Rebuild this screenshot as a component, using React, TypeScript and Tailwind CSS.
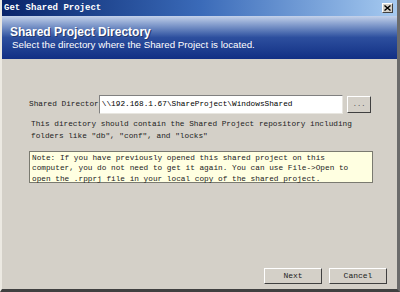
import React from 'react';

const mono = { fontFamily: '"Liberation Mono", "DejaVu Sans Mono", monospace' };

const App: React.FC = () => {
  return (
    <div className="w-[400px] h-[292px] bg-[#d4d0c8] flex flex-col overflow-hidden border-l-2 border-l-[#ece9e2] border-r-[3px] border-r-[#6b6b6b] border-b-[3px] border-b-[#404040]">
      {/* title bar */}
      <div className="h-[16px] shrink-0 flex items-center justify-between pl-[2px] pr-[4px] bg-gradient-to-r from-[#0a246a] via-[#3a6ab8] to-[#a6caf0]">
        <span className="text-white font-bold text-[9px] leading-none" style={mono}>
          Get Shared Project
        </span>
        <button className="w-[11px] h-[10px] bg-[#d4d0c8] border border-t-white border-l-white border-r-[#404040] border-b-[#404040] flex items-center justify-center">
          <svg width="7" height="6" viewBox="0 0 7 6">
            <path d="M0.5 0.5 L6.5 5.5 M6.5 0.5 L0.5 5.5" stroke="#000" strokeWidth="1.4" />
          </svg>
        </button>
      </div>

      {/* header */}
      <div
        className="h-[43px] shrink-0 flex flex-col justify-center pl-[8px] pt-[1px] bg-gradient-to-b from-[#c4d2ea] via-[#2d4f9e] to-[#122f84]"
        style={{ fontFamily: '"Liberation Sans", Arial, sans-serif' }}
      >
        <div className="text-white font-bold text-[12px] leading-[14px] [text-shadow:1px_1px_0_#24386a]">
          Shared Project Directory
        </div>
        <div className="text-white text-[9.75px] leading-[12px] pl-[2px]">
          Select the directory where the Shared Project is located.
        </div>
      </div>

      {/* body */}
      <div className="flex-1 flex flex-col pl-[27px] pr-[26px] pt-[36px]" style={mono}>
        <div className="flex items-center">
          <span className="w-[70px] whitespace-nowrap text-[7.75px] text-[#222]">
            Shared Director
          </span>
          <div className="w-[245px] h-[19px] bg-white border border-t-[#808080] border-l-[#808080] border-r-[#e8e6e0] border-b-[#e8e6e0] flex items-center pl-[2px] text-[7.75px] text-black">
            \\192.168.1.67\ShareProject\WindowsShared
          </div>
          <button className="ml-[4px] w-[24px] h-[17px] bg-[#d4d0c8] border border-t-white border-l-white border-r-[#404040] border-b-[#404040] text-[7px] text-[#555] leading-none">
            ...
          </button>
        </div>

        <div className="mt-[4px] text-[7.75px] leading-[12px] text-[#222] pl-[2px]">
          <div>This directory should contain the Shared Project repository including</div>
          <div>folders like "db", "conf", and "locks"</div>
        </div>

        <div className="mt-[9px] w-[344px] h-[32px] bg-[#ffffe1] border border-[#7a7a70] pl-[2px] pt-[1px] text-[7.75px] leading-[10.3px] text-[#222]">
          <div>Note: If you have previously opened this shared project on this</div>
          <div>computer, you do not need to get it again. You can use File-&gt;Open to</div>
          <div>open the .rpprj file in your local copy of the shared project.</div>
        </div>

        <div className="mt-auto mb-[5px] flex justify-end gap-[7px] -mr-[16px]">
          <button className="w-[58px] h-[16px] bg-[#d4d0c8] border border-t-white border-l-white border-r-[#404040] border-b-[#404040] text-[8px] text-[#222] leading-none">
            Next
          </button>
          <button className="w-[58px] h-[16px] bg-[#d4d0c8] border border-t-white border-l-white border-r-[#404040] border-b-[#404040] text-[8px] text-[#222] leading-none">
            Cancel
          </button>
        </div>
      </div>
    </div>
  );
};

export default App;
